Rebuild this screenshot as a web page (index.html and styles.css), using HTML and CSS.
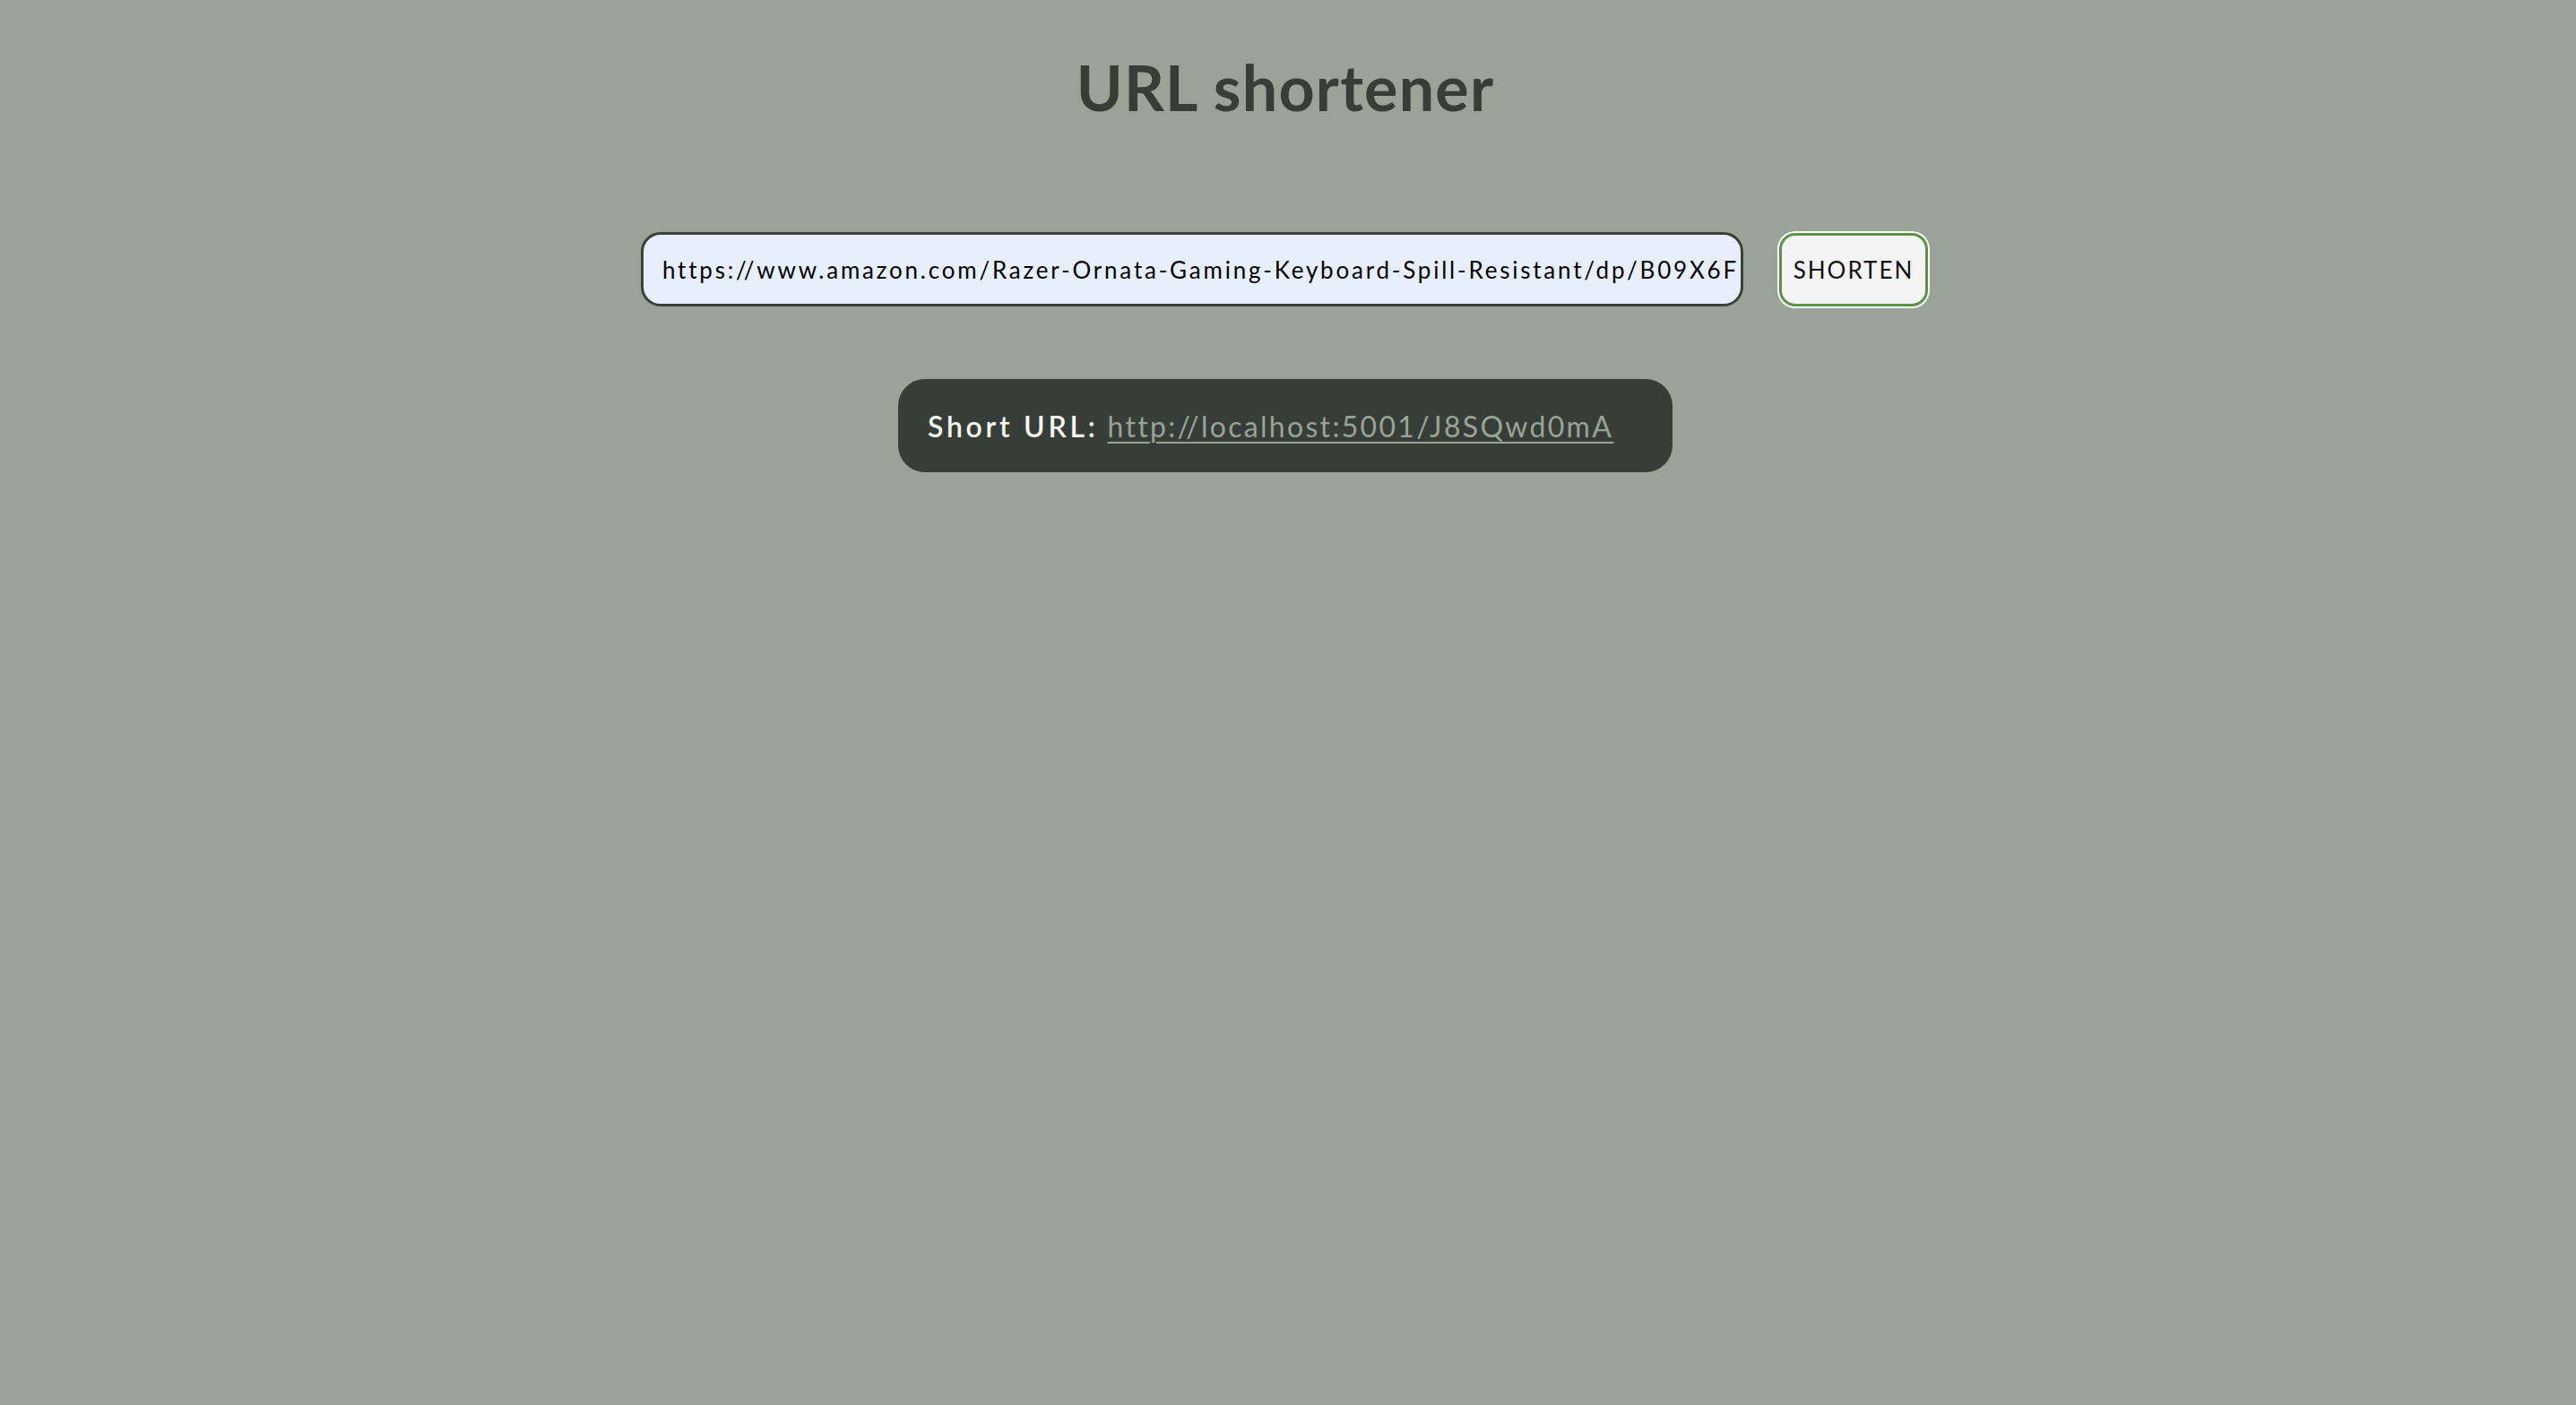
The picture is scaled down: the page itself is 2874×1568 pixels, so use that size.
FILE: index.html
```html
<!DOCTYPE html>
<html lang="en">
<head>
<meta charset="utf-8">
<title>URL shortener</title>
<link rel="stylesheet" href="styles.css">
</head>
<body>
<main class="page">
  <h1 class="title">URL shortener</h1>
  <form class="shorten-form">
    <input class="url-input" type="text" value="https://www.amazon.com/Razer-Ornata-Gaming-Keyboard-Spill-Resistant/dp/B09X6F">
    <button class="shorten-btn" type="button">SHORTEN</button>
  </form>
  <div class="result">
    <span class="result-label">Short URL:</span>
    <a class="result-link" href="#">http://localhost:5001/J8SQwd0mA</a>
  </div>
</main>
</body>
</html>
```

FILE: styles.css
```css
html, body {
  margin: 0;
  padding: 0;
  background: #99a397;
}
body {
  font-family: "Lato", "Noto Sans", sans-serif;
}
.page {
  display: flex;
  flex-direction: column;
  align-items: center;
}
.title {
  margin: 55px 6px 0 0;
  font-size: 70px;
  line-height: 84px;
  font-weight: 700;
  color: #373e37;
  letter-spacing: 1.2px;
}
.shorten-form {
  margin-top: 120px;
  display: flex;
  align-items: center;
  gap: 40px;
  padding-right: 8px;
}
.url-input {
  box-sizing: border-box;
  width: 1230px;
  height: 83px;
  padding: 0 2px 0 21px;
  border: 3px solid #3a413a;
  border-radius: 22px;
  background: #e8effc;
  color: #000;
  font-family: "Lato", "Noto Sans", sans-serif;
  font-size: 26px;
  letter-spacing: 2.78px;
  outline: none;
}
.shorten-btn {
  box-sizing: border-box;
  width: 166px;
  height: 82px;
  padding: 0;
  border: 3px solid #5b9448;
  border-radius: 18px;
  background: #f4f4f4;
  box-shadow: 0 0 0 2px #ffffff;
  color: #111;
  font-family: "Lato", "Noto Sans", sans-serif;
  font-size: 26px;
  letter-spacing: 2px;
}
.result {
  box-sizing: border-box;
  margin: 81px 6px 0 0;
  width: 864px;
  height: 104px;
  padding: 0 33px;
  display: flex;
  align-items: center;
  gap: 10px;
  background: #373e37;
  border-radius: 30px;
  font-size: 32px;
}
.result-label {
  color: #f4f4f0;
  font-weight: 600;
  letter-spacing: 3.7px;
}
.result-link {
  color: #99a397;
  letter-spacing: 2.3px;
  text-decoration: underline;
  text-underline-offset: 5px;
  text-decoration-thickness: 2px;
}
```
